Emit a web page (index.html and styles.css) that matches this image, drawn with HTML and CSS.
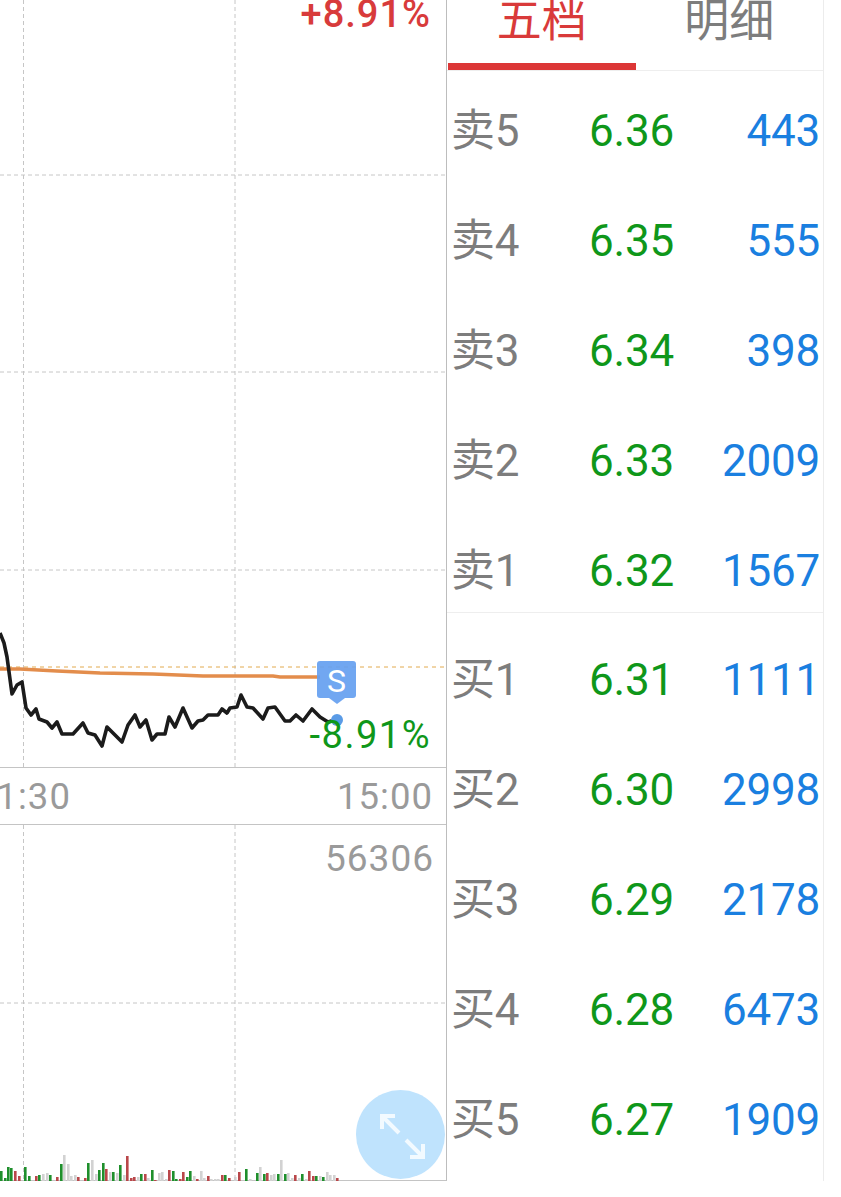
FILE: index.html
```html
<!DOCTYPE html>
<html lang="zh">
<head>
<meta charset="utf-8">
<title>分时</title>
<link rel="stylesheet" href="styles.css">
</head>
<body>
<div class="app">
  <section class="left">
    <div class="chart">
      <svg class="plot" width="446" height="767" viewBox="0 0 446 767">
        <g class="grid">
          <path d="M0 175H446M0 372H446M0 570H446"/>
          <path d="M23.5 0V767M235 0V767"/>
        </g>
        <path class="base" d="M0 667H446"/>
        <polyline class="avg" points="0,669 20,669 57,671 100,673 153,674 203,676 273,676 280,677 320,677"/>
        <polyline class="price" points="0,633 4,643 7,657 12,694 17,685 22,682 26,708 31,715 36,709 39,719 47,722 52,728 57,722 62,734 73,734 83,723 88,733 95,735 102,746 107,727 113,733 122,742 128,725 135,715 140,727 146,720 152,740 157,734 165,734 169,717 175,727 183,708 192,728 198,721 203,720 208,715 218,715 222,709 227,713 230,708 237,707 241,695 247,707 253,708 263,719 268,708 275,707 285,721 290,721 296,715 303,721 312,709 320,717 328,722 335,720"/>
      </svg>
      <span class="pct up">+8.91%</span>
      <div class="marker">S</div>
      <span class="dot"></span>
      <span class="pct down">-8.91%</span>
    </div>
    <div class="axis"><span class="axis-start">11:30</span><span>15:00</span></div>
    <div class="volume">
      <svg class="plot" width="446" height="356" viewBox="0 0 446 356">
        <g class="grid">
          <path d="M0 178H446"/>
          <path d="M23.5 0V356M235 0V356"/>
        </g>
        <g class="n">
          <rect x="42" y="349" width="2" height="7"/><rect x="46" y="348" width="2" height="8"/><rect x="63" y="330" width="2" height="26"/><rect x="67" y="339" width="2" height="17"/><rect x="70" y="351" width="2" height="5"/><rect x="74" y="350" width="2" height="6"/><rect x="91" y="335" width="2" height="21"/><rect x="95" y="349" width="2" height="7"/><rect x="109" y="347" width="2" height="9"/><rect x="116" y="348" width="2" height="8"/><rect x="123" y="350" width="2" height="6"/><rect x="137" y="352" width="2" height="4"/><rect x="147" y="353" width="2" height="3"/><rect x="158" y="348" width="2" height="8"/><rect x="161" y="347" width="2" height="9"/><rect x="165" y="354" width="2" height="2"/><rect x="193" y="351" width="2" height="5"/><rect x="200" y="346" width="2" height="10"/><rect x="203" y="353" width="2" height="3"/><rect x="210" y="354" width="2" height="2"/><rect x="214" y="354" width="2" height="2"/><rect x="217" y="354" width="2" height="2"/><rect x="234" y="352" width="2" height="4"/><rect x="249" y="354" width="2" height="2"/><rect x="259" y="342" width="2" height="14"/><rect x="270" y="350" width="2" height="6"/><rect x="273" y="349" width="2" height="7"/><rect x="280" y="335" width="2" height="21"/><rect x="287" y="348" width="2" height="8"/><rect x="291" y="353" width="2" height="3"/><rect x="298" y="353" width="2" height="3"/><rect x="305" y="354" width="2" height="2"/><rect x="319" y="351" width="2" height="5"/><rect x="326" y="347" width="2" height="9"/><rect x="329" y="350" width="2" height="6"/><rect x="333" y="350" width="2" height="6"/>
        </g>
        <g class="g">
          <rect x="0" y="346" width="2" height="10"/><rect x="4" y="353" width="2" height="3"/><rect x="7" y="342" width="2" height="14"/><rect x="10" y="343" width="2" height="13"/><rect x="24" y="342" width="2" height="14"/><rect x="28" y="351" width="2" height="5"/><rect x="38" y="350" width="2" height="6"/><rect x="49" y="350" width="2" height="6"/><rect x="60" y="339" width="2" height="17"/><rect x="87" y="338" width="2" height="18"/><rect x="98" y="345" width="2" height="11"/><rect x="102" y="338" width="2" height="18"/><rect x="112" y="347" width="2" height="9"/><rect x="119" y="340" width="2" height="16"/><rect x="140" y="349" width="2" height="7"/><rect x="151" y="345" width="2" height="11"/><rect x="172" y="346" width="2" height="10"/><rect x="175" y="354" width="2" height="2"/><rect x="186" y="352" width="2" height="4"/><rect x="189" y="346" width="2" height="10"/><rect x="224" y="350" width="2" height="6"/><rect x="245" y="344" width="2" height="12"/><rect x="256" y="348" width="2" height="8"/><rect x="263" y="349" width="2" height="7"/><rect x="277" y="349" width="2" height="7"/><rect x="284" y="349" width="2" height="7"/><rect x="301" y="349" width="2" height="7"/><rect x="315" y="351" width="2" height="5"/><rect x="322" y="352" width="2" height="4"/>
        </g>
        <g class="r">
          <rect x="14" y="346" width="2" height="10"/><rect x="18" y="351" width="2" height="5"/><rect x="35" y="351" width="2" height="5"/><rect x="56" y="352" width="2" height="4"/><rect x="77" y="352" width="2" height="4"/><rect x="84" y="353" width="2" height="3"/><rect x="105" y="344" width="2" height="12"/><rect x="126" y="331" width="2" height="25"/><rect x="130" y="353" width="2" height="3"/><rect x="133" y="352" width="2" height="4"/><rect x="144" y="349" width="2" height="7"/><rect x="154" y="355" width="2" height="1"/><rect x="168" y="345" width="2" height="11"/><rect x="179" y="354" width="2" height="2"/><rect x="182" y="347" width="2" height="9"/><rect x="196" y="354" width="2" height="2"/><rect x="207" y="351" width="2" height="5"/><rect x="221" y="350" width="2" height="6"/><rect x="228" y="353" width="2" height="3"/><rect x="238" y="347" width="2" height="9"/><rect x="266" y="348" width="2" height="8"/><rect x="294" y="350" width="2" height="6"/><rect x="308" y="346" width="2" height="10"/><rect x="312" y="351" width="2" height="5"/><rect x="336" y="353" width="2" height="3"/>
        </g>
      </svg>
      <span class="vol-max">56306</span>
      <button class="expand" type="button" aria-label="expand">
        <svg width="64" height="64" viewBox="0 0 64 64">
          <path d="M13 13 L30 30 M13 26 V13 H26"/>
          <path d="M37 37 L54 54 M54 41 V54 H41"/>
        </svg>
      </button>
    </div>
  </section>
  <section class="right">
    <nav class="tabs">
      <div class="tab active">五档</div>
      <div class="tab">明细</div>
    </nav>
    <div class="book sell">
      <div class="row"><span class="label">卖5</span><span class="price-v">6.36</span><span class="qty">443</span></div>
      <div class="row"><span class="label">卖4</span><span class="price-v">6.35</span><span class="qty">555</span></div>
      <div class="row"><span class="label">卖3</span><span class="price-v">6.34</span><span class="qty">398</span></div>
      <div class="row"><span class="label">卖2</span><span class="price-v">6.33</span><span class="qty">2009</span></div>
      <div class="row"><span class="label">卖1</span><span class="price-v">6.32</span><span class="qty">1567</span></div>
    </div>
    <div class="book buy">
      <div class="row"><span class="label">买1</span><span class="price-v">6.31</span><span class="qty">1111</span></div>
      <div class="row"><span class="label">买2</span><span class="price-v">6.30</span><span class="qty">2998</span></div>
      <div class="row"><span class="label">买3</span><span class="price-v">6.29</span><span class="qty">2178</span></div>
      <div class="row"><span class="label">买4</span><span class="price-v">6.28</span><span class="qty">6473</span></div>
      <div class="row"><span class="label">买5</span><span class="price-v">6.27</span><span class="qty">1909</span></div>
    </div>
  </section>
</div>
</body>
</html>
```
FILE: styles.css
```css
* { box-sizing: border-box; }
html, body { margin: 0; height: 100%; background: #fff; overflow: hidden; }
body { font-family: Roboto, "Noto Sans CJK SC", sans-serif; }

.app { display: flex; height: 1181px; width: 824px; }

.left {
  width: 447px;
  flex: none;
  display: flex;
  flex-direction: column;
  border-right: 1px solid #bdbdbd;
  border-bottom: 1px solid #c4c4c4;
}
.chart {
  position: relative;
  height: 768px;
  flex: none;
  border-bottom: 1px solid #c4c4c4;
}
.plot { display: block; }
.grid path { fill: none; stroke: #c6c6c6; stroke-width: 1; stroke-dasharray: 4 3; }
.base { fill: none; stroke: #e2aa4e; stroke-width: 1; stroke-dasharray: 4 4; }
.avg { fill: none; stroke: #e38d4c; stroke-width: 3.6; }
.price { fill: none; stroke: #1b1b1b; stroke-width: 3.6; stroke-linejoin: round; }

.pct { position: absolute; right: 15px; font-size: 38px; line-height: 44px; letter-spacing: 1px; font-weight: 500; }
.up { top: -8px; color: #d83b3b; }
.down { top: 713px; color: #0f971a; letter-spacing: 1.5px; font-weight: 400; }

.marker {
  position: absolute;
  left: 317px;
  top: 661px;
  width: 39px;
  height: 37px;
  border-radius: 3px;
  background: rgba(101, 160, 240, 0.92);
  color: #fff;
  font-size: 32px;
  line-height: 40px;
  text-align: center;
}
.marker::after {
  content: "";
  position: absolute;
  left: 12px;
  top: 37px;
  border-style: solid;
  border-width: 6px 8px 0;
  border-color: rgba(101, 160, 240, 0.92) transparent transparent;
}
.dot {
  position: absolute;
  left: 331px;
  top: 714px;
  width: 12px;
  height: 12px;
  border-radius: 50%;
  background: #5a9be6;
}

.axis {
  height: 56px;
  flex: none;
  display: flex;
  justify-content: space-between;
  overflow: hidden;
  padding: 7px 13px 0 0;
  font-size: 36.5px;
  line-height: 44px;
  letter-spacing: 1px;
  color: #9a9a9a;
}
.axis-start { margin-left: -25px; }

.volume {
  position: relative;
  flex: 1;
  border-top: 1px solid #c4c4c4;
}
.g rect { fill: #1f8f2c; width: 2.6px; }
.r rect { fill: #b9474a; width: 2.6px; }
.n rect { fill: #d2d2d2; width: 2.6px; }
.vol-max {
  position: absolute;
  right: 12px;
  top: 12px;
  font-size: 37px;
  line-height: 44px;
  letter-spacing: 1px;
  color: #9a9a9a;
}
.expand {
  position: absolute;
  left: 356px;
  top: 265px;
  width: 89px;
  height: 89px;
  padding: 0;
  border: 0;
  border-radius: 50%;
  background: #bfe3fd;
  display: flex;
  align-items: center;
  justify-content: center;
}
.expand path { fill: none; stroke: #fff; stroke-width: 4; opacity: 0.8; }

.right {
  width: 377px;
  flex: none;
  display: flex;
  flex-direction: column;
  border-right: 1px solid #ececec;
}
.tabs { display: flex; height: 71px; flex: none; border-bottom: 1px solid #eeeeee; padding-left: 1px; }
.tab {
  width: 188px;
  height: 70px;
  text-align: center;
  font-size: 45px;
  line-height: 44px;
  color: #7d7d7d;
}
.active { color: #d93a3a; border-bottom: 7px solid #dc3636; }

.book { display: flex; flex-direction: column; gap: 49.9px; }
.sell { height: 542px; padding-top: 30px; border-bottom: 1px solid #eeeeee; }
.buy { padding-top: 37px; }
.row {
  height: 60px;
  flex: none;
  display: grid;
  grid-template-columns: 138px 1fr auto;
  align-items: center;
  padding: 0 3px 0 4px;
  font-size: 44px;
  line-height: 60px;
  letter-spacing: -0.2px;
}
.label { color: #7d7d7d; }
.price-v { color: #0f971a; }
.qty { color: #1a7fe0; }
```
